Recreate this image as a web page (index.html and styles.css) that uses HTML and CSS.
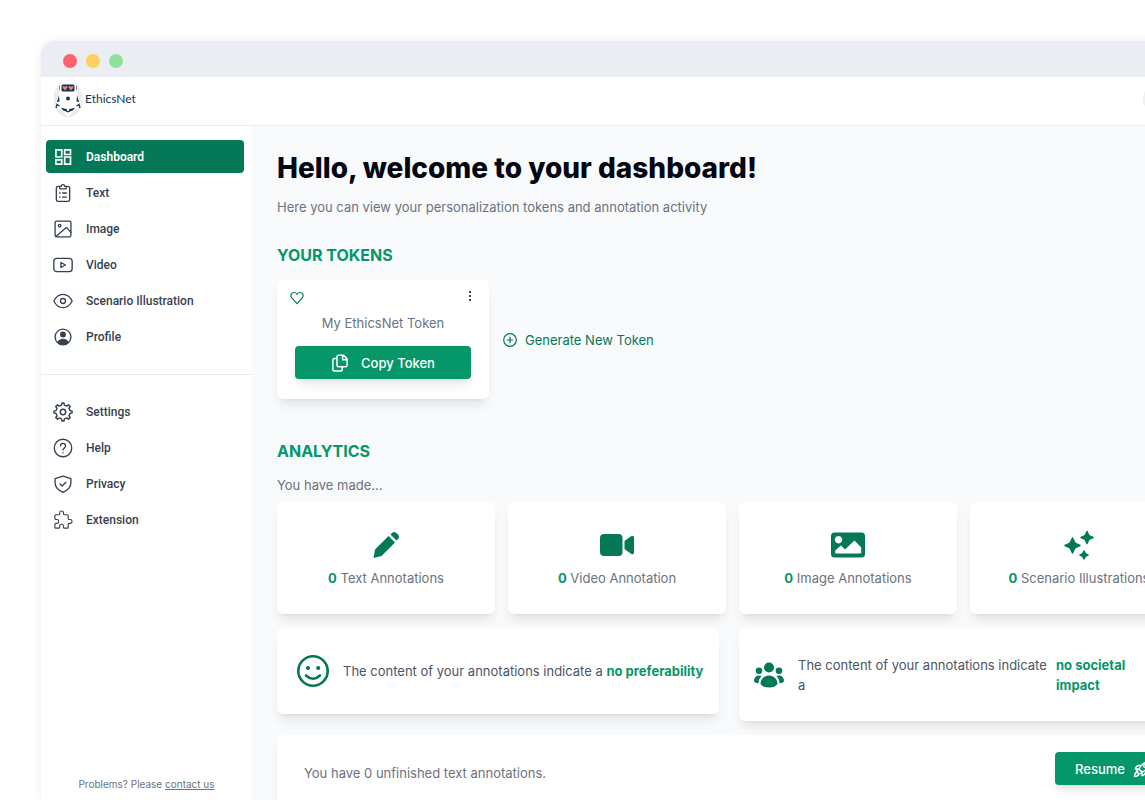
FILE: index.html
```html
<!DOCTYPE html>
<html lang="en">
<head>
    <meta charset="UTF-8">
    <meta name="viewport" content="width=device-width, initial-scale=1.0">
    <title>EthicsNet Dashboard</title>
    <link rel="stylesheet" href="styles.css">
</head>
<body>
    <div class="window">
        <div class="titlebar">
            <span class="dot dot-red"></span>
            <span class="dot dot-yellow"></span>
            <span class="dot dot-green"></span>
        </div>

        <header class="header">
            <a class="logo" href="#">
                <svg width="30" height="38" viewBox="0 0 30 38">
                    <ellipse cx="15" cy="19" rx="14.5" ry="18.5" fill="#ececec"/>
                    <path d="M8 3q7-5 14 0l2 11 2 12-11 11L4 26l2-12z" fill="#fff"/>
                    <rect x="8.500" y="4.500" width="13" height="7" rx="1.500" fill="#17364d"/>
                    <path d="M12 10.500L9.500 7.500q0-2.300 2.500-.8 2.500-1.500 2.500.8zM18 10.500l-2.500-3q0-2.300 2.500-.8 2.500-1.500 2.500.8z" fill="#f0828a"/>
                    <path d="M6.500 5.500v5M23.500 5.500v5" stroke="#8b99a5" fill="none"/>
                    <circle cx="15" cy="18.500" r="2" fill="#17364d"/>
                    <path d="M6 15.500l-2 6.500 2.500-.5zM24 15.500l2 6.500-2.500-.5z" fill="#17364d"/>
                    <path d="M3 28l1-3.500 2.500 1.500M27 28l-1-3.500-2.500 1.500" fill="none" stroke="#17364d" stroke-width="1.300"/>
                    <path d="M8 27.500q4 1.500 7 1.500t7-1.500l-2 3q-2.500.5-5 2-2.500-1.500-5-2z" fill="#17364d"/>
                    <circle cx="15" cy="29.800" r="1.200" fill="#fff"/>
                </svg>
                <span>EthicsNet</span>
            </a>
            <button class="avatar" type="button" aria-label="Account"></button>
        </header>

        <div class="body">
            <aside class="sidebar">
                <nav class="nav">
                    <a class="nav-item active" href="#">
                        <svg viewBox="0 0 24 24" fill="currentColor"><path d="M20 4.500v3.500h-5V4.500h5M9.500 4.500V11H4.500V4.500h5m10.500 8.500v6.500h-5V13h5M9.500 16.500v3H4.500v-3h5M22 2.500h-9V10h9V2.500zM11.500 2.500h-9V13h9V2.500zm10.500 8.500h-9v10.500h9V11zm-10.500 3.500h-9v7h9v-7z"/></svg>
                        Dashboard
                    </a>
                    <a class="nav-item" href="#">
                        <svg class="line" viewBox="0 0 24 24"><path d="M8 4H6a2 2 0 0 0-2 2v14a2 2 0 0 0 2 2h12a2 2 0 0 0 2-2V6a2 2 0 0 0-2-2h-2M8 6V4h2q0-2 2-2t2 2h2v2q0 1-1 1H9Q8 7 8 6zM8 12h.5M11.500 12H16M8 17h.5M11.500 17H16"/></svg>
                        Text
                    </a>
                    <a class="nav-item" href="#">
                        <svg class="line" viewBox="0 0 24 24"><rect x="2.500" y="2.500" width="19" height="19" rx="2"/><circle cx="8" cy="8" r="1.500"/><path d="M3.500 21L15 11q1-1 2 0l4.500 5"/></svg>
                        Image
                    </a>
                    <a class="nav-item" href="#">
                        <svg class="line" viewBox="0 0 24 24"><rect x="1" y="4" width="22" height="16" rx="3.500"/><path d="M9.500 9v6l5.500-3z"/></svg>
                        Video
                    </a>
                    <a class="nav-item" href="#">
                        <svg class="line" viewBox="0 0 24 24"><path d="M1 12q4-8 11-8t11 8q-4 8-11 8T1 12z"/><circle cx="12" cy="12" r="3"/></svg>
                        Scenario Illustration
                    </a>
                    <a class="nav-item" href="#">
                        <svg class="line" viewBox="0 0 24 24"><circle cx="12" cy="12" r="9.500"/><circle cx="12" cy="9" r="3.500" class="solid"/><path class="solid" d="M5 18.500Q7 14 12 14t7 4.500q-3 3-7 3t-7-3z"/></svg>
                        Profile
                    </a>
                </nav>
                <nav class="nav nav-secondary">
                    <a class="nav-item" href="#">
                        <svg class="line" viewBox="1 1 22 22"><circle cx="12" cy="12" r="3"/><path d="M19.622 10.395l-1.097-2.650L20 6l-2-2-1.735 1.483-2.707-1.113L12.935 2h-1.954l-.632 2.401-2.645 1.115L6 4 4 6l1.453 1.789-1.080 2.657L2 11v2l2.401.656L5.516 16.300 4 18l2 2 1.791-1.460 2.606 1.072L11 22h2l.605-2.387 2.650-1.098L18 20l2-2-1.484-1.751 1.098-2.651L22 12.977V11z"/></svg>
                        Settings
                    </a>
                    <a class="nav-item" href="#">
                        <svg class="line" viewBox="0 0 24 24"><circle cx="12" cy="12" r="10.500"/><path d="M9 9.500c0-4 6-4 6 0 0 2.500-3 2.300-3 5M12 17.500v.3"/></svg>
                        Help
                    </a>
                    <a class="nav-item" href="#">
                        <svg class="line" viewBox="0 0 24 24"><path d="M12 2.500L21.500 5.500v5c0 5-4 9-9.500 11.500C6.500 19.500 2.500 15.500 2.500 10.500v-5zM8.500 12l2.500 2.500 4.500-4.500"/></svg>
                        Privacy
                    </a>
                    <a class="nav-item" href="#">
                        <svg class="line" viewBox="2 1 21 21"><path transform="matrix(-1 0 0 1 24 0)" d="M11 4a2 2 0 1 1 4 0v1a1 1 0 0 0 1 1h3a1 1 0 0 1 1 1v3a1 1 0 0 1-1 1h-1a2 2 0 1 0 0 4h1a1 1 0 0 1 1 1v3a1 1 0 0 1-1 1h-3a1 1 0 0 1-1-1v-1a2 2 0 1 0-4 0v1a1 1 0 0 1-1 1H7a1 1 0 0 1-1-1v-3a1 1 0 0 0-1-1H4a2 2 0 1 1 0-4h1a1 1 0 0 0 1-1V7a1 1 0 0 1 1-1h3a1 1 0 0 0 1-1V4z" stroke-width="1.200"/></svg>
                        Extension
                    </a>
                </nav>
                <p class="problems">Problems? Please <a href="#">contact us</a></p>
            </aside>

            <main class="main">
                <h1>Hello, welcome to your dashboard!</h1>
                <p class="subtitle">Here you can view your personalization tokens and annotation activity</p>

                <h2>YOUR TOKENS</h2>
                <div class="tokens">
                    <div class="card token">
                        <div class="token-top">
                            <svg width="14" height="14" viewBox="0 0 24 24" fill="none" stroke="#047857" stroke-width="2"><path d="M12 21.500L3 12C-.5 7 3 2.500 7 2.500q3 0 5 3 2-3 5-3c4 0 7.500 4.500 4 9.500z"/></svg>
                            <button class="kebab" type="button" aria-label="Token options">
                                <svg width="4" height="12" viewBox="0 0 4 12" fill="#111827"><circle cx="2" cy="2" r="1.100"/><circle cx="2" cy="6" r="1.100"/><circle cx="2" cy="10" r="1.100"/></svg>
                            </button>
                        </div>
                        <p class="token-name">My EthicsNet Token</p>
                        <button class="btn btn-copy" type="button">
                            <svg width="18" height="18" viewBox="0 0 24 24" fill="none" stroke="currentColor" stroke-width="2" stroke-linejoin="round"><path d="M10 1.500h6.500l5 5V15q0 2-2 2H10q-2 0-2-2V3.500q0-2 2-2M15.500 2v5.500H21M8 6H4.500q-2 0-2 2v12.500q0 2 2 2H13q2 0 2-2V17"/></svg>
                            Copy Token
                        </button>
                    </div>
                    <button class="generate" type="button">
                        <svg width="14" height="14" viewBox="0 0 14 14" fill="none" stroke="currentColor" stroke-width="1.200"><circle cx="7" cy="7" r="6.300"/><path d="M7 3.800v6.400M3.800 7h6.400"/></svg>
                        Generate New Token
                    </button>
                </div>

                <h2>ANALYTICS</h2>
                <p class="made">You have made...</p>
                <div class="stats">
                    <div class="card stat">
                        <svg width="30" height="30" viewBox="0 0 30 30" fill="currentColor"><path d="M2.500 28l1.500-8.500L17.500 6l6.500 6.500L10.500 26zM19.500 4.500l2-2q2-1.500 4.500 1 3 2.500 1.500 5l-2 2z"/></svg>
                        <p><b>0</b> Text Annotations</p>
                    </div>
                    <div class="card stat">
                        <svg width="34" height="30" viewBox="0 0 34 30" fill="currentColor"><rect y="4" width="22.500" height="22" rx="4"/><path d="M24.500 11l6.500-4.700q3-1.500 3 1.500v14.400q0 3-3 1.500L24.500 19z"/></svg>
                        <p><b>0</b> Video Annotation</p>
                    </div>
                    <div class="card stat">
                        <svg width="34" height="30" viewBox="0 0 34 30" fill="currentColor"><path fill-rule="evenodd" d="M3.500 2.500h27q3.500 0 3.500 3.500v18q0 3.500-3.500 3.500h-27Q0 27.500 0 24V6q0-3.500 3.500-3.500zM7.500 6a3.700 3.700 0 1 0 .01 0zM4.200 23.500h26v-6L23.500 10.500l-9.500 9-4-4-5.800 5z"/></svg>
                        <p><b>0</b> Image Annotations</p>
                    </div>
                    <div class="card stat">
                        <svg width="30" height="30" viewBox="0 0 30 30" fill="currentColor" stroke="currentColor" stroke-width="1.500" stroke-linejoin="round"><path d="M8.500 8L10.900 13.100 16 15.500 10.900 17.900 8.500 23 6.100 17.900 1 15.500 6.100 13.100zM23 1.500l1.900 4.100 4.100 1.900-4.100 1.900L23 13.500l-1.900-4.100L17 7.500l4.100-1.900zM20 21l1.300 2.700L24 25l-2.700 1.300L20 29l-1.300-2.700L16 25l2.700-1.300z"/></svg>
                        <p><b>0</b> Scenario Illustrations</p>
                    </div>
                </div>

                <div class="insights">
                    <div class="card insight preferability">
                        <svg width="32" height="32" viewBox="0 0 32 32" fill="currentColor"><circle cx="16" cy="16" r="14.700" fill="none" stroke="currentColor" stroke-width="2.600"/><circle cx="11" cy="13" r="2.100"/><circle cx="21.200" cy="13" r="2.100"/><path d="M9 20.500q7 6.500 14 0" fill="none" stroke="currentColor" stroke-width="2.600" stroke-linecap="round"/></svg>
                        <p>The content of your annotations indicate a <b>no preferability</b></p>
                    </div>
                    <div class="card insight societal">
                        <svg width="30" height="26" viewBox="0 0 30 26" fill="currentColor"><circle cx="15" cy="5.500" r="5"/><circle cx="5" cy="8.800" r="3.300"/><circle cx="25" cy="8.800" r="3.300"/><path d="M15 13.500c5 0 8.500 4 8.500 8.500q-2.500 3.500-8.500 3.500T6.500 22c0-4.500 3.500-8.500 8.500-8.500zM7.500 14Q4 17.500 4.500 21.500L1 20.500Q0 20 0 18q1-4.500 5-4.500zM22.500 14Q26 17.500 25.500 21.500l3.500-1q1-.5 1-2.500-1-4.500-5-4.500z"/></svg>
                        <p>The content of your annotations indicate a</p>
                        <b>no societal impact</b>
                    </div>
                </div>

                <div class="card unfinished">
                    <p>You have 0 unfinished text annotations.</p>
                    <button class="btn btn-resume" type="button">
                        Resume
                        <svg width="18" height="18" viewBox="0 0 24 24" fill="none" stroke="currentColor" stroke-width="1.800" stroke-linejoin="round"><path d="M8 12q4-9 14-10 0 9-9 14zM8 12H3q1-5 8-5M12 16v5q5-1 5-8M7.500 12.500q-3 .5-3 3l2 .5q.5 2 .5 3 3 0 5-3zM5.500 16Q2 17 2 22q5 0 6-3"/><circle cx="16" cy="8" r="1.800"/></svg>
                    </button>
                </div>
            </main>
        </div>
    </div>
</body>
</html>
```
FILE: styles.css
```css
* {
    box-sizing: border-box;
}
body {
    margin: 0;
    height: 100vh;
    display: flex;
    overflow: hidden;
    background-color: #fff;
    font-family: Inter, "Liberation Sans", sans-serif;
    font-size: 13px;
    line-height: 20px;
    color: #6b7280;
}
h1, h2, p {
    margin: 0;
}
a {
    color: inherit;
    text-decoration: none;
}
button {
    font: inherit;
    border: 0;
    padding: 0;
    background: none;
    cursor: pointer;
}
svg {
    flex-shrink: 0;
}
/* the window runs past the right edge of the viewport */
.window {
    flex: 1;
    display: flex;
    flex-direction: column;
    min-width: 0;
    margin: 41px -69px 0 41px;
    border-radius: 14px 0 0 0;
    background-color: #fff;
    box-shadow: 0 0 10px rgba(0, 0, 0, 0.08);
}
.titlebar {
    display: flex;
    gap: 9px;
    padding: 13px 22px 9px;
    border-radius: 14px 0 0 0;
    background-color: #eaeef3;
}
.dot {
    width: 14px;
    height: 14px;
    border-radius: 50%;
}
.dot-red {
    background-color: #ff626c;
}
.dot-yellow {
    background-color: #ffd05c;
}
.dot-green {
    background-color: #8fe09b;
}
.header {
    display: flex;
    align-items: center;
    justify-content: space-between;
    padding: 3px 37px 7px 12px;
    border-bottom: 1px solid #e9ecf0;
}
.logo {
    display: flex;
    align-items: center;
    gap: 2px;
    font-family: Lato, sans-serif;
    font-size: 12px;
    color: #17364d;
}
.avatar {
    width: 34px;
    height: 34px;
    border-radius: 50%;
    background-color: #eef0f2;
}
.body {
    flex: 1;
    display: flex;
    min-height: 0;
}
.sidebar {
    display: flex;
    flex-direction: column;
    width: 211px;
    flex-shrink: 0;
}
.nav {
    display: flex;
    flex-direction: column;
    gap: 3px;
    padding: 14px 8px 21px 5px;
}
.nav-secondary {
    padding-top: 20px;
    border-top: 1px solid #e9ecf0;
}
.nav-item {
    display: flex;
    align-items: center;
    gap: 13px;
    height: 33px;
    padding-left: 7px;
    border-radius: 4px;
    font-family: Roboto, sans-serif;
    font-size: 12px;
    font-weight: 500;
    color: #374151;
}
.nav-item svg {
    width: 20px;
    height: 20px;
}
.nav-item.active {
    background-color: #047857;
    color: #fff;
    font-weight: 600;
}
.line {
    fill: none;
    stroke: currentColor;
    stroke-width: 1.6;
    stroke-linecap: round;
    stroke-linejoin: round;
}
.solid {
    fill: currentColor;
    stroke: none;
}
.problems {
    margin-top: auto;
    padding-bottom: 6px;
    font-size: 10px;
    text-align: center;
}
.problems a {
    text-decoration: underline;
}
.main {
    flex: 1;
    min-width: 0;
    padding: 24px 26px 26px 25px;
    overflow-y: auto;
    scrollbar-width: none;
    background-color: #f9fafc;
}
h1 {
    font-size: 28px;
    line-height: 36px;
    font-weight: 800;
    color: #030712;
}
h2 {
    font-size: 16px;
    line-height: 24px;
    font-weight: 700;
    color: #059669;
}
.subtitle {
    margin: 11px 0 26px;
}
.card {
    background-color: #fff;
    border-radius: 6px;
    box-shadow: 0 8px 12px -3px rgba(0, 0, 0, 0.1), 0 3px 5px -4px rgba(0, 0, 0, 0.1);
}
.tokens {
    display: flex;
    align-items: center;
    gap: 14px;
    margin: 13px 0 40px;
}
.token {
    width: 212px;
    padding: 11px 13px 20px;
}
.token-top {
    display: flex;
    justify-content: space-between;
    height: 14px;
}
.kebab {
    display: flex;
    width: 12px;
    height: 10px;
    align-items: center;
    justify-content: center;
}
.token-name {
    margin: 8px 0 13px;
    text-align: center;
}
.btn {
    display: flex;
    align-items: center;
    justify-content: center;
    height: 33px;
    border-radius: 4px;
    background-color: #059669;
    color: #fff;
    font-weight: 500;
    box-shadow: 0 8px 12px -3px rgba(0, 0, 0, 0.1), 0 3px 5px -3px rgba(0, 0, 0, 0.1);
}
.btn-copy {
    width: 176px;
    margin: 0 auto;
    gap: 12px;
}
.generate {
    display: flex;
    align-items: center;
    gap: 8px;
    color: #047857;
}
.made {
    margin: 12px 0 7px;
}
.stats {
    display: grid;
    grid-template-columns: repeat(4, 1fr);
    gap: 13px;
}
.stat {
    display: flex;
    flex-direction: column;
    align-items: center;
    gap: 8px;
    padding: 28px 0 26px;
}
.stat svg, .insight svg {
    color: #047857;
}
b {
    font-weight: 700;
    color: #059669;
}
.insights {
    display: grid;
    grid-template-columns: 1fr 1fr;
    align-items: start;
    gap: 13px;
    margin: 14px 0;
}
.insight {
    display: flex;
    align-items: center;
    gap: 14px;
    color: #4b5563;
}
.preferability {
    margin-right: 7px;
    padding: 27px 4px 27px 20px;
}
.societal {
    padding: 27px 34px 26px 15px;
}
.societal p {
    flex: 1;
}
.societal b {
    width: 98px;
    margin-left: -10px;
}
.unfinished {
    display: flex;
    justify-content: space-between;
    align-items: center;
    padding: 17px 17px 22px 27px;
}
.unfinished p {
    padding-top: 8px;
}
.btn-resume {
    gap: 8px;
    padding: 0 20px;
}
```
